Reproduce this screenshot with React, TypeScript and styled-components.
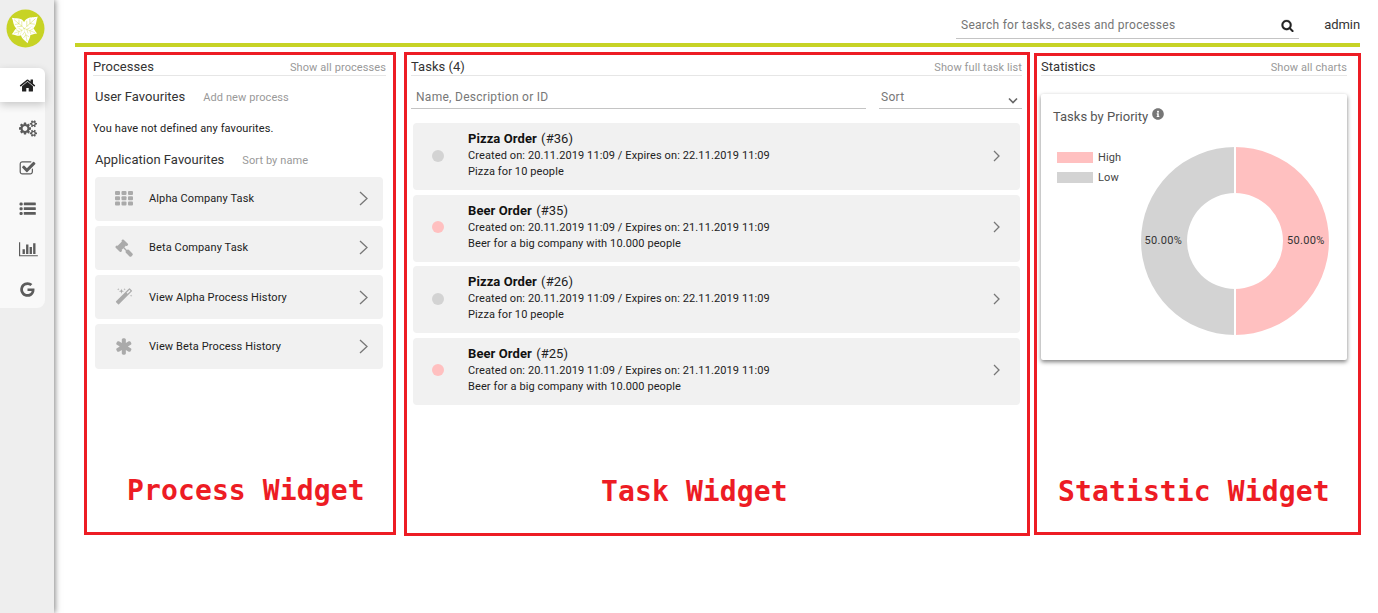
import React from 'react';
import styled, { createGlobalStyle } from 'styled-components';
import { FaInfoCircle } from 'react-icons/fa';

const Global = createGlobalStyle`
  * { box-sizing: border-box; }
  body { margin: 0; background: #fff; font-family: Roboto, "Liberation Sans", sans-serif; color: #333; overflow: hidden; }
`;

const Page = styled.div`
  display: flex;
  width: 1378px;
  height: 613px;
  overflow: hidden;
`;

const Sidebar = styled.aside`
  width: 54px;
  flex: none;
  background: #eee;
  box-shadow: 1px 0 6px rgba(0, 0, 0, 0.5);
  padding-top: 9px;
`;

const Logo = styled.svg`
  display: block;
  width: 39px;
  height: 39px;
  margin-left: 6px;
`;

const Nav = styled.nav`
  margin-top: 20px;
  width: 45px;
  height: 240px;
  background: #f9f9f9;
  border-radius: 0 8px 8px 0;
`;

const NavItem = styled.div<{ $active?: boolean; $h: number }>`
  display: flex;
  align-items: center;
  height: ${p => p.$h}px;
  padding-left: 19px;
  color: ${p => (p.$active ? '#222' : '#5c5c5c')};
  background: ${p => (p.$active ? '#fff' : 'transparent')};
  border-radius: 0 6px 0 0;
  box-shadow: ${p => (p.$active ? '0 3px 8px rgba(0,0,0,0.2)' : 'none')};
`;

const Main = styled.main`
  width: 1307px;
  padding-left: 21px;
`;

const Header = styled.header`
  display: flex;
  justify-content: flex-end;
  width: 1285px;
  height: 47px;
  border-bottom: 4px solid #c7d325;
`;

const SearchBox = styled.div`
  display: flex;
  justify-content: space-between;
  align-items: center;
  width: 343px;
  height: 27px;
  margin-top: 12px;
  padding: 0 5px 0 5px;
  border-bottom: 1px solid #c4c4c4;
  font-size: 12px;
  letter-spacing: 0.26px;
  color: #757575;
  svg { color: #222; stroke: #222; stroke-width: 30; }
`;

const User = styled.div`
  width: 61px;
  padding-top: 17px;
  text-align: right;
  font-size: 13px;
  line-height: 15px;
  letter-spacing: -0.1px;
`;

const Widgets = styled.div`
  display: flex;
  align-items: flex-start;
  padding: 5px 0 0 9px;
`;

const Widget = styled.section<{ $w: number; $h: number; $gap: number; $pad: string; $top?: number }>`
  display: flex;
  flex-direction: column;
  flex: none;
  width: ${p => p.$w}px;
  height: ${p => p.$h}px;
  margin-right: ${p => p.$gap}px;
  margin-top: ${p => p.$top ?? 0}px;
  padding: ${p => p.$pad};
  border: 3px solid #ed1c24;
`;

const WidgetHead = styled.div<{ $h?: number }>`
  display: flex;
  justify-content: space-between;
  align-items: flex-end;
  flex: none;
  height: ${p => p.$h ?? 21}px;
  border-bottom: 1px solid #e6e6e6;
`;

const Title = styled.span`
  font-size: 13px;
  line-height: 17px;
  letter-spacing: 0.03px;
  color: #333;
  white-space: nowrap;
`;

const Link = styled.span`
  height: 17px;
  font-size: 11px;
  line-height: 19px;
  letter-spacing: 0.09px;
  color: #999;
  white-space: nowrap;
`;

const SubHead = styled.div<{ $mt: number }>`
  display: flex;
  gap: 18px;
  height: 17px;
  margin-top: ${p => p.$mt}px;
  padding-left: 2px;
`;

const Empty = styled.div`
  margin-top: 17px;
  height: 14px;
  font-size: 11px;
  line-height: 14px;
  letter-spacing: 0.1px;
  color: #222;
`;

const ProcessList = styled.div`
  display: flex;
  flex-direction: column;
  gap: 4.9px;
  margin: 8.5px 3px 0 2px;
`;

const ProcessRow = styled.div`
  display: flex;
  align-items: center;
  height: 44.4px;
  padding: 0 15px 0 20px;
  border-radius: 4px;
  background: #f1f1f1;
  font-size: 11px;
  letter-spacing: 0.12px;
  color: #222;
`;

const ProcessIcon = styled.span`
  display: flex;
  width: 34px;
  color: #aaa;
`;

const Grow = styled.span`
  flex: 1;
  white-space: nowrap;
`;

const Caption = styled.div<{ $left: number; $bottom: number }>`
  margin-top: auto;
  padding: 0 0 ${p => p.$bottom}px ${p => p.$left}px;
  font: bold 28px/34px "DejaVu Sans Mono", monospace;
  letter-spacing: 0.12px;
  color: #ed1c24;
  white-space: nowrap;
`;

const Filters = styled.div`
  display: flex;
  gap: 13px;
  margin-top: 9px;
`;

const Field = styled.div<{ $w: number; $pl: number }>`
  display: flex;
  justify-content: space-between;
  align-items: center;
  width: ${p => p.$w}px;
  height: 24px;
  padding: 1px 4px 0 ${p => p.$pl}px;
  border-bottom: 1px solid #c4c4c4;
  font-size: 12px;
  letter-spacing: 0.28px;
  color: #777;
  svg { margin-top: 7px; }
`;

const TaskList = styled.div`
  display: flex;
  flex-direction: column;
  gap: 4.5px;
  margin: 14px 2px 0 2px;
`;

const TaskRow = styled.div`
  display: flex;
  align-items: center;
  height: 67px;
  padding: 0 20px 2px 19px;
  border-radius: 4px;
  background: #f1f1f1;
`;

const Dot = styled.span<{ $color: string }>`
  width: 12px;
  height: 12px;
  margin-right: 24px;
  border-radius: 50%;
  background: ${p => p.$color};
`;

const TaskText = styled.div`
  flex: 1;
  margin-top: -1px;
  font-size: 11px;
  line-height: 16px;
  letter-spacing: 0.105px;
  color: #222;
  white-space: nowrap;
`;

const TaskName = styled.div`
  height: 18px;
  font-size: 13px;
  line-height: 17px;
  letter-spacing: 0.07px;
  b { color: #111; letter-spacing: 0.08px; margin-right: 1px; }
`;

const ChartCard = styled.div`
  display: flex;
  flex-direction: column;
  margin-top: 18px;
  width: 306px;
  height: 266px;
  padding: 13px 12px 0 12px;
  border-radius: 2px;
  box-shadow: 0 2px 4px rgba(0, 0, 0, 0.5);
`;

const ChartTitle = styled.div`
  display: flex;
  gap: 4px;
  font-size: 13px;
  line-height: 20px;
  color: #555;
  svg { margin-top: 1px; color: #777; }
`;

const ChartBody = styled.div`
  display: flex;
  justify-content: space-between;
  padding: 19px 5px 0 4px;
`;

const Legend = styled.div`
  display: flex;
  flex-direction: column;
  padding-top: 1px;
`;

const LegendItem = styled.div<{ $color: string }>`
  display: flex;
  align-items: center;
  gap: 5px;
  height: 20px;
  font-size: 11px;
  line-height: 20px;
  letter-spacing: 0.1px;
  padding-top: 1px;
  color: #444;
  &::before { content: ''; width: 36px; height: 11px; background: ${p => p.$color}; }
`;

const Donut = styled.svg`
  width: 190px;
  height: 190px;
  font: 11px Roboto, sans-serif;
  letter-spacing: 0.3px;
`;

const paths = {
  home: 'M1472 992v480q0 26-19 45t-45 19h-384v-384h-256v384h-384q-26 0-45-19t-19-45v-480q0-1 .5-3t.5-3l575-474 575 474q1 2 1 6zm223-69l-62 74q-8 9-21 11h-3q-13 0-21-7l-692-577-692 577q-12 8-24 7-13-2-21-11l-62-74q-8-10-7-23.5t11-21.5l719-599q32-26 76-26t76 26l244 204v-195q0-14 9-23t23-9h192q14 0 23 9t9 23v408l219 182q10 8 11 21.5t-7 23.5z',
  check: 'M1472 930v318q0 119-84.5 203.5t-203.5 84.5h-832q-119 0-203.5-84.5t-84.5-203.5v-832q0-119 84.5-203.5t203.5-84.5h832q63 0 117 25 15 7 18 23 3 17-9 29l-49 49q-10 10-23 10-3 0-9-2-23-6-45-6h-832q-66 0-113 47t-47 113v832q0 66 47 113t113 47h832q66 0 113-47t47-113v-254q0-13 9-22l64-64q10-10 23-10 6 0 12 3 20 8 20 29zm231-489l-814 814q-24 24-57 24t-57-24l-430-430q-24-24-24-57t24-57l110-110q24-24 57-24t57 24l263 263 647-647q24-24 57-24t57 24l110 110q24 24 24 57t-24 57z',
  chart: 'M640 896v512h-256v-512h256zm384-512v1024h-256v-1024h256zm1024 1152v128h-2048v-1536h128v1408h1920zm-640-896v768h-256v-768h256zm384-384v1152h-256v-1152h256z',
  google: 'M896 786h725q12 67 12 128 0 217-91 387.5t-259.5 266.5-386.5 96q-157 0-299-60.5t-245-163.5-163.5-245-60.5-299 60.5-299 163.5-245 245-163.5 299-60.5q300 0 515 201l-209 201q-123-119-306-119-129 0-238.5 65t-173.5 176.5-64 243.5 64 243.5 173.5 176.5 238.5 65q87 0 160-24t120-60 82-82 51.5-87 22.5-78h-436v-264z',
  search: 'M1216 832q0-185-131.5-316.5t-316.5-131.5-316.5 131.5-131.5 316.5 131.5 316.5 316.5 131.5 316.5-131.5 131.5-316.5zm512 832q0 52-38 90t-90 38q-54 0-90-38l-343-342q-179 124-399 124-143 0-273.5-55.5t-225-150-150-225-55.5-273.5 55.5-273.5 150-225 225-150 273.5-55.5 273.5 55.5 225 150 150 225 55.5 273.5q0 220-124 399l343 343q37 37 37 90z',
  gavel: 'M1771 1536q0 53-37 90l-107 108q-39 37-91 37-53 0-90-37l-363-364q-38-36-38-90 0-53 43-96l-256-256-126 126q-14 14-34 14t-34-14q2 2 12.5 12t12.5 13 10 11.5 10 13.5 6 13.5 5.5 16.5 1.5 18q0 38-28 68-3 3-16.5 18t-19 20.5-18.5 16.5-22 15.5-22 9-26 4.5q-40 0-68-28l-408-408q-28-28-28-68 0-13 4.5-26t9-22 15.5-22 16.5-18.5 20.5-19 18-16.5q30-28 68-28 10 0 18 1.5t16.5 5.5 13.5 6 13.5 10 11.5 10 13 12.5 12 12.5q-14-14-14-34t14-34l348-348q14-14 34-14t34 14q-2-2-12.5-12t-12.5-13-10-11.5-10-13.5-6-13.5-5.5-16.5-1.5-18q0-38 28-68 3-3 16.5-18t19-20.5 18.5-16.5 22-15.5 22-9 26-4.5q40 0 68 28l408 408q28 28 28 68 0 13-4.5 26t-9 22-15.5 22-16.5 18.5-20.5 19-18 16.5q-30 28-68 28-10 0-18-1.5t-16.5-5.5-13.5-6-13.5-10-11.5-10-13-12.5-12-12.5q14 14 14 34t-14 34l-126 126 256 256q43-43 96-43 52 0 91 37l363 363q37 39 37 91z',
  magic: 'M1254 581l293-293-107-107-293 293zm447-293q0 27-18 45l-1286 1286q-18 18-45 18t-45-18l-198-198q-18-18-18-45t18-45l1286-1286q18-18 45-18t45 18l198 198q18 18 18 45zm-1351-190l98 30-98 30-30 98-30-98-98-30 98-30 30-98zm350 162l196 60-196 60-60 196-60-196-196-60 196-60 60-196zm930 478l98 30-98 30-30 98-30-98-98-30 98-30 30-98zm-640-640l98 30-98 30-30 98-30-98-98-30 98-30 30-98z',
  asterisk: 'M1482 1050q46 26 59.5 77.5t-12.5 97.5l-64 110q-26 46-77.5 59.5t-97.5-12.5l-266-153v307q0 52-38 90t-90 38h-128q-52 0-90-38t-38-90v-307l-266 153q-46 26-97.5 12.5t-77.5-59.5l-64-110q-26-46-12.5-97.5t59.5-77.5l266-154-266-154q-46-26-59.5-77.5t12.5-97.5l64-110q26-46 77.5-59.5t97.5 12.5l266 153v-307q0-52 38-90t90-38h128q52 0 90 38t38 90v307l266-153q46-26 97.5-12.5t77.5 59.5l64 110q26 46 12.5 97.5t-59.5 77.5l-266 154z',
};

const Icon = ({ name, size, box = 1792 }: { name: keyof typeof paths; size: number; box?: number }) => (
  <svg width={(size * box) / 1792} height={size} viewBox={`0 0 ${box} 1792`} fill="currentColor">
    <path d={paths[name]} />
  </svg>
);

const smallCog =
  'M1920 1338v140q0 16-149 31-12 27-30 52 51 113 51 138 0 4-4 7-122 71-124 71-8 0-46-47t-52-68q-20 2-30 2t-30-2q-14 21-52 68t-46 47q-2 0-124-71-4-3-4-7 0-25 51-138-18-25-30-52-149-15-149-31v-140q0-16 149-31 13-29 30-52-51-113-51-138 0-4 4-7 4-2 35-20t59-34 30-16q8 0 46 46.5t52 67.5q20-2 30-2t30 2q51-71 92-112l6-2q4 0 124 70 4 3 4 7 0 25-51 138 17 23 30 52 149 15 149 31z';
const cogHole = 'M1664 1408q0-52-38-90t-90-38-90 38-38 90q0 53 37.5 90.5t90.5 37.5 90.5-37.5 37.5-90.5z';
const bigCog =
  'M896 896q0-106-75-181t-181-75-181 75-75 181 75 181 181 75 181-75 75-181zm384-91v185q0 10-7 19.5t-16 10.5l-155 24q-11 35-32 76 34 48 90 115 7 11 7 20 0 12-7 19-23 30-82.5 89.5t-78.5 59.5q-11 0-21-7l-115-90q-37 19-77 31-11 108-23 155-7 24-30 24h-186q-11 0-20-7.5t-10-17.5l-23-153q-34-10-75-31l-118 89q-7 7-20 7-11 0-21-8-144-133-144-160 0-9 7-19 10-14 41-53t47-61q-23-44-35-82l-152-24q-10-1-17-9.5t-7-19.5v-185q0-10 7-19.5t16-10.5l155-24q11-35 32-76-34-48-90-115-7-11-7-20 0-12 7-20 22-30 82-89t79-59q11 0 21 7l115 90q34-18 77-32 11-108 23-154 7-24 30-24h186q11 0 20 7.5t10 17.5l23 153q34 10 75 31l118-89q8-7 20-7 11 0 21 8 144 133 144 160 0 8-7 19-12 16-42 54t-45 60q23 48 34 82l152 23q10 2 17 10.5t7 19.5z';

const CogsIcon = () => (
  <svg width="18" height="17" viewBox="0 0 1920 1792" fill="currentColor" fillRule="evenodd">
    <path d={bigCog} />
    <path d={smallCog + cogHole} />
    <path d={smallCog + cogHole} transform="translate(0 -1024)" />
  </svg>
);

const GridIcon = () => (
  <svg width="18" height="15" viewBox="0 0 18 15" fill="currentColor">
    {[0, 5.3, 10.6].map(y => [0, 6.5, 13].map(x => <rect key={`${x}-${y}`} x={x} y={y} width="5" height="4" rx="1" />))}
  </svg>
);

const ListIcon = () => (
  <svg width="17" height="14" viewBox="0 0 17 14" fill="currentColor">
    {[0.5, 5.3, 10].map(y => (
      <g key={y}>
        <rect x="0.5" y={y} width="3.2" height="3" rx="1.2" />
        <rect x="4.8" y={y} width="12" height="2.8" rx="0.4" />
      </g>
    ))}
  </svg>
);

const Chevron = ({ w, h, sw }: { w: number; h: number; sw: number }) => (
  <svg width={w} height={h} fill="none" stroke="#777" strokeWidth={sw}>
    <path d={`M1 1L${w - 1} ${h / 2}L1 ${h - 1}`} />
  </svg>
);

const Leaf = ({ t }: { t: string }) => (
  <g transform={t}>
    <path d="M0 0C-4-1-6.500-5-5-9C-4-12-2-13 0-17C2-13 4-12 5-9C6.500-5 4-1 0 0Z" fill="#fff" />
    <path d="M0 0V-14M0-3L-4-6.500M0-3L4-6.500M0-7L-3.500-10M0-7L3.500-10" stroke="#c7d325" strokeWidth=".4" fill="none" />
  </g>
);

const LogoMark = () => (
  <Logo viewBox="0 0 39 39">
    <circle cx="19.5" cy="19.5" r="19" fill="#c7d325" />
    <Leaf t="translate(18 19) rotate(-50) scale(.93)" />
    <Leaf t="translate(18.5 19.5) rotate(48) scale(1.05)" />
    <Leaf t="translate(18.5 20.5) rotate(-110) scale(.8)" />
    <Leaf t="translate(18.5 20) rotate(168) scale(.86)" />
    <Leaf t="translate(18.5 19.5) rotate(112) scale(.8)" />
  </Logo>
);

const processes = [
  { name: 'Alpha Company Task', icon: <GridIcon /> },
  { name: 'Beta Company Task', icon: <Icon name="gavel" size={18} /> },
  { name: 'View Alpha Process History', icon: <Icon name="magic" size={18} /> },
  { name: 'View Beta Process History', icon: <Icon name="asterisk" size={19} /> },
];

const tasks = [
  { name: 'Pizza Order', id: 36, expires: '22.11.2019', text: 'Pizza for 10 people', color: '#d3d3d3' },
  { name: 'Beer Order', id: 35, expires: '21.11.2019', text: 'Beer for a big company with 10.000 people', color: '#ffc0c0' },
  { name: 'Pizza Order', id: 26, expires: '22.11.2019', text: 'Pizza for 10 people', color: '#d3d3d3' },
  { name: 'Beer Order', id: 25, expires: '21.11.2019', text: 'Beer for a big company with 10.000 people', color: '#ffc0c0' },
];

export default function App() {
  return (
    <Page>
      <Global />
      <Sidebar>
        <LogoMark />
        <Nav>
          <NavItem $active $h={34}><Icon name="home" size={17} /></NavItem>
          <NavItem $h={53}><CogsIcon /></NavItem>
          <NavItem $h={27}><Icon name="check" size={17} /></NavItem>
          <NavItem $h={54}><ListIcon /></NavItem>
          <NavItem $h={26}><Icon name="chart" size={16.5} box={2048} /></NavItem>
          <NavItem $h={55}><Icon name="google" size={17} /></NavItem>
        </Nav>
      </Sidebar>
      <Main>
        <Header>
          <SearchBox>
            Search for tasks, cases and processes
            <Icon name="search" size={13} />
          </SearchBox>
          <User>admin</User>
        </Header>
        <Widgets>
          <Widget $w={312} $h={483} $gap={8} $pad="0 7px 0 6px">
            <WidgetHead><Title>Processes</Title><Link>Show all processes</Link></WidgetHead>
            <SubHead $mt={12}><Title>User Favourites</Title><Link>Add new process</Link></SubHead>
            <Empty>You have not defined any favourites.</Empty>
            <SubHead $mt={15}><Title>Application Favourites</Title><Link>Sort by name</Link></SubHead>
            <ProcessList>
              {processes.map(p => (
                <ProcessRow key={p.name}>
                  <ProcessIcon>{p.icon}</ProcessIcon>
                  <Grow>{p.name}</Grow>
                  <Chevron w={9} h={15} sw={1.3} />
                </ProcessRow>
              ))}
            </ProcessList>
            <Caption $left={34} $bottom={24}>Process Widget</Caption>
          </Widget>
          <Widget $w={626} $h={484} $gap={4} $pad="0 5px 0 4px">
            <WidgetHead><Title>Tasks (4)</Title><Link>Show full task list</Link></WidgetHead>
            <Filters>
              <Field $w={455} $pl={5}>Name, Description or ID</Field>
              <Field $w={143} $pl={2}>
                Sort
                <svg width="10" height="7" fill="none" stroke="#666" strokeWidth="1.6"><path d="M1 1.5L5 5.5L9 1.5" /></svg>
              </Field>
            </Filters>
            <TaskList>
              {tasks.map(t => (
                <TaskRow key={t.id}>
                  <Dot $color={t.color} />
                  <TaskText>
                    <TaskName><b>{t.name}</b> (#{t.id})</TaskName>
                    <div>Created on: 20.11.2019 11:09 / Expires on: {t.expires} 11:09</div>
                    <div>{t.text}</div>
                  </TaskText>
                  <Chevron w={7} h={12} sw={1.3} />
                </TaskRow>
              ))}
            </TaskList>
            <Caption $left={190} $bottom={24}>Task Widget</Caption>
          </Widget>
          <Widget $w={327} $h={482} $gap={0} $pad="0 11px 0 4px" $top={1}>
            <WidgetHead $h={20}><Title>Statistics</Title><Link>Show all charts</Link></WidgetHead>
            <ChartCard>
              <ChartTitle>Tasks by Priority <FaInfoCircle size={12} /></ChartTitle>
              <ChartBody>
                <Legend>
                  <LegendItem $color="#ffc0c0">High</LegendItem>
                  <LegendItem $color="#d3d3d3">Low</LegendItem>
                </Legend>
                <Donut viewBox="0 0 190 190">
                  <path d="M95 1A94 94 0 0 1 95 189V143A48 48 0 0 0 95 47Z" fill="#ffc0c0" />
                  <path d="M95 1A94 94 0 0 0 95 189V143A48 48 0 0 1 95 47Z" fill="#d3d3d3" />
                  <path d="M95 0V47.5M95 142.5V190" stroke="#fff" strokeWidth="2" />
                  <text x="4.5" y="97.5" fill="#333">50.00%</text>
                  <text x="147" y="97.5" fill="#333">50.00%</text>
                </Donut>
              </ChartBody>
            </ChartCard>
            <Caption $left={17} $bottom={23}>Statistic Widget</Caption>
          </Widget>
        </Widgets>
      </Main>
    </Page>
  );
}
